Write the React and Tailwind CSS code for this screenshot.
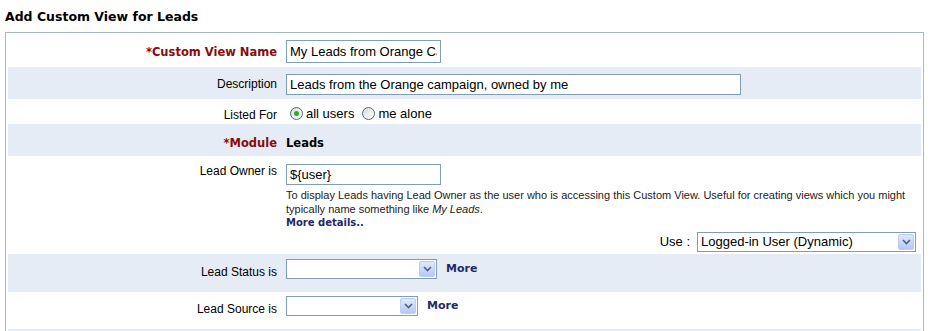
import React from 'react';

const sans = { fontFamily: '"Liberation Sans", Arial, sans-serif' };
const bold = { fontFamily: '"DejaVu Sans", Verdana, sans-serif' };

function Chevron() {
  return (
    <svg width="9" height="6" viewBox="0 0 9 6">
      <path d="M1 1 L4.5 4.5 L8 1" stroke="#4d6185" strokeWidth="1.6" fill="none" />
    </svg>
  );
}

function Select({ width, value }) {
  return (
    <div className={`flex h-[20px] items-stretch border border-[#7f9db9] bg-white ${width}`}>
      <div className="flex flex-1 items-center pl-[3px] text-[13px] text-black" style={sans}>
        {value}
      </div>
      <div className="m-[1px] flex w-[16px] items-center justify-center rounded-[2px] border border-[#b9cdf6] bg-gradient-to-b from-[#dfe8fd] to-[#b7c9f3]">
        <Chevron />
      </div>
    </div>
  );
}

function Radio({ checked, label }) {
  return (
    <label className="flex items-center gap-[3px]">
      <span className="flex h-[13px] w-[13px] items-center justify-center rounded-full border border-[#47698f] bg-gradient-to-br from-[#dcdcd6] to-white">
        {checked && <span className="h-[5px] w-[5px] rounded-full bg-[#2fa82f]" />}
      </span>
      <span>{label}</span>
    </label>
  );
}

function Row({ blue, label, required, height, labelPt, valuePt, children }) {
  return (
    <div className={`flex ${height} ${blue ? 'bg-[#e6ecf5]' : 'bg-white'}`}>
      <div className={`w-[269px] shrink-0 text-right ${labelPt}`}>
        {required ? (
          <span className="text-[11.5px] font-bold text-[#8b0a0a]" style={bold}>
            *{label}
          </span>
        ) : (
          <span className="text-[12px] text-black" style={sans}>
            {label}
          </span>
        )}
      </div>
      <div className={`flex-1 pl-[9px] ${valuePt}`}>{children}</div>
    </div>
  );
}

export default function App() {
  return (
    <div className="h-[331px] w-[930px] overflow-hidden bg-white text-black" style={sans}>
      <div className="pl-[5px] pt-[9px] text-[12.5px] font-bold leading-[15px]" style={bold}>
        Add Custom View for Leads
      </div>

      <div className="ml-[5px] mt-[8px] w-[919px] border border-[#a9b8c8] px-[2px]">
        <Row label="Custom View Name" required height="h-[34px]" labelPt="pt-[6px]" valuePt="pt-[6px]">
          <input
            readOnly
            value="My Leads from Orange Campaign"
            className="h-[23px] w-[155px] border border-[#7f9db9] px-[3px] text-[13px] outline-none"
            style={sans}
          />
        </Row>

        <Row blue label="Description" height="h-[32px]" labelPt="pt-[4px]" valuePt="pt-[5px]">
          <input
            readOnly
            value="Leads from the Orange campaign, owned by me"
            className="h-[21px] w-[455px] border border-[#7f9db9] bg-white px-[3px] text-[13px] outline-none"
            style={sans}
          />
        </Row>

        <Row label="Listed For" height="h-[25px]" labelPt="pt-[3px]" valuePt="pt-[5px]">
          <div className="flex items-center gap-[8px] pl-[4px] text-[13px]">
            <Radio checked label="all users" />
            <Radio label="me alone" />
          </div>
        </Row>

        <Row blue label="Module" required height="h-[32px]" labelPt="pt-[6px]" valuePt="pt-[6px]">
          <span className="text-[11.5px] font-bold" style={bold}>
            Leads
          </span>
        </Row>

        <Row label="Lead Owner is" height="h-[98px]" labelPt="pt-[2px]" valuePt="pt-[6px]">
          <input
            readOnly
            value="${user}"
            className="h-[21px] w-[155px] border border-[#7f9db9] px-[3px] text-[13px] outline-none"
            style={sans}
          />
          <p className="mt-[2px] pr-[8px] text-[11px] leading-[14px] text-[#222]">
            To display Leads having Lead Owner as the user who is accessing this Custom View. Useful for creating views which you might typically name something like <span className="italic">My Leads</span>.
          </p>
          <div className="text-[10px] font-bold leading-[14px] text-[#1f2a6b]" style={bold}>
            More details..
          </div>
          <div className="mt-[2px] flex items-center justify-end gap-[7px] pr-[5px]">
            <span className="text-[13px]">Use :</span>
            <Select width="w-[219px]" value="Logged-in User (Dynamic)" />
          </div>
        </Row>

        <Row blue label="Lead Status is" height="h-[38px]" labelPt="pt-[5px]" valuePt="pt-[5px]">
          <div className="flex items-center gap-[9px]">
            <Select width="w-[151px]" value="" />
            <span className="text-[11px] font-bold text-[#1f2a6b]" style={bold}>
              More
            </span>
          </div>
        </Row>

        <Row label="Lead Source is" height="h-[37px]" labelPt="pt-[4px]" valuePt="pt-[4px]">
          <div className="flex items-center gap-[9px]">
            <Select width="w-[132px]" value="" />
            <span className="text-[11px] font-bold text-[#1f2a6b]" style={bold}>
              More
            </span>
          </div>
        </Row>

        <Row blue label="" height="h-[30px]" labelPt="" valuePt="" />
      </div>
    </div>
  );
}
